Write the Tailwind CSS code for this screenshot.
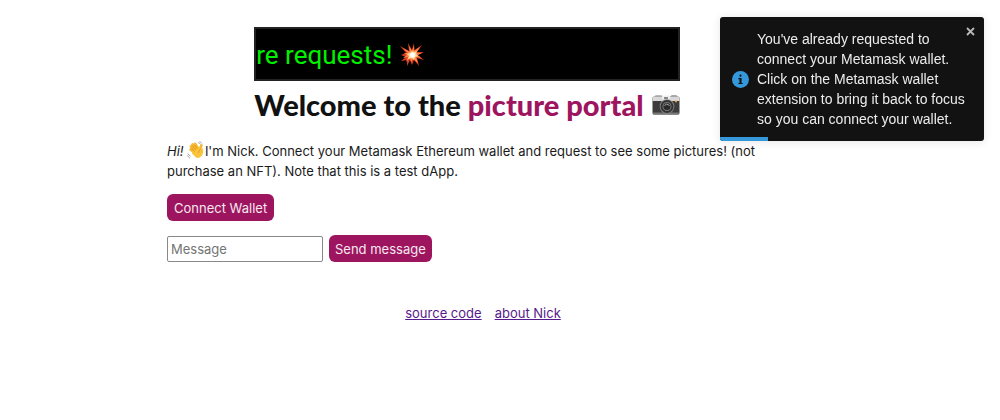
<!DOCTYPE html>
<html lang="en">
<head>
<meta charset="utf-8">
<meta name="viewport" content="width=device-width, initial-scale=1">
<title>Picture portal</title>
<script src="https://cdn.jsdelivr.net/npm/@tailwindcss/browser@4"></script>
</head>
<body class="bg-white font-['Inter',sans-serif] text-[13px] leading-5 text-[#1a1a1a]">
<main class="ml-[16.7%] w-3/5 pt-[27px]">
  <div class="mx-auto w-fit">
    <div class="flex h-[54px] items-center overflow-hidden border-2 border-[#222] bg-black pt-[2px] text-[26px] leading-8 text-[#00f000]">
      <span class="whitespace-nowrap font-['Roboto',sans-serif]">re requests!</span>
      <svg class="ml-2 size-6 shrink-0" viewBox="0 0 24 24" role="img" aria-label="collision">
        <path fill="#d93a20" d="M12 7 14 0 14.500 7 22 2 17 9 24 9 18 12 24 17 17 15 19 23 14 17 12 22 10 17 7 23 7 17 1 18 6 14 1 12 6 10 0 3 9 8 8 0Z"/>
        <path fill="#ff8b50" d="M12 8 13.500 3 14 8 20 4 16 10 22 10 17 12 21 15 16 14 18 20 13 16 11 19 10 15 6 19 8 14 3 15 7 12 4 10 8 10 3 5 10 9 9 3Z"/>
        <path fill="#ffdc9a" d="M12 8 14 9 17 8 16 11 18 13 15 14 14 17 12 15 8 16 9 13 7 11 10 10Z"/>
        <circle cx="12.500" cy="12" r="2.500" fill="#fff"/>
      </svg>
    </div>
    <h1 class="mt-2 flex items-center font-['Lato',sans-serif] text-[29px] leading-8 font-black text-[#111]">
      <span class="whitespace-nowrap">Welcome to the <span class="text-[#9e155f]">picture portal</span></span>
      <svg class="ml-2 h-5 w-7 shrink-0" viewBox="0 0 28 20" role="img" aria-label="camera">
        <rect x="3" y="0" width="7" height="3" rx="1" fill="#bbb"/>
        <rect x="19" y="0" width="6" height="3" rx="1" fill="#aaa"/>
        <rect x="0.500" y="1.500" width="27" height="18" rx="1.500" fill="#3c3c3c"/>
        <path d="M.5 6V3q0-1.500 1.500-1.500h24q1.500 0 1.500 1.500v3Z" fill="#d8d8d8"/>
        <rect x="10" y="0.500" width="8" height="4" rx="1" fill="#eee"/>
        <rect x="12" y="2" width="4" height="2" fill="#888"/>
        <path d="M1 17.500h26v1q0 1-1 1H2q-1 0-1-1Z" fill="#777"/>
        <circle cx="15" cy="11.500" r="7.300" fill="#888"/>
        <circle cx="15" cy="11.500" r="6.500" fill="#333"/>
        <circle cx="15" cy="11.500" r="4.500" fill="#777"/>
        <circle cx="15" cy="11.500" r="3.500" fill="#292929"/>
        <path d="M12.500 10.500q2-3 5 0" fill="none" stroke="#aaa"/>
        <circle cx="24" cy="6.500" r="1" fill="#f0a020"/>
      </svg>
    </h1>
  </div>
  <p class="mt-5"><em>Hi!</em>
    <svg class="-mr-1 -mt-1 inline-block size-[18px]" viewBox="0 0 18 18" role="img" aria-label="waving hand">
      <g fill="none" stroke="#f5b82e" stroke-width="2.600" stroke-linecap="round">
        <path d="M8.500 10 4 5.500M10 9 5.500 3.500M11.500 8 8 2.800M8 12 3.500 8.500"/>
        <path d="M13.500 9q-.5-3 1-4.500"/>
      </g>
      <path fill="#f9c43c" d="M5.500 10 11 5.500l2.500 2.700 2-1.200q1.500 4-.5 7.500-2.500 3.500-6 2L5 12.500Z"/>
      <path fill="none" stroke="#d88b18" stroke-width=".7" d="M9 9 5 4.500M10.500 8 7.500 4M8 10.500 4.500 7.500M13.500 8.500q-2 1-2 3.500"/>
      <path fill="none" stroke="#aaa" d="M11 1.500q2 .5 2.500 2M12.500.5q1.500.5 2.500 2M1 12.500q.5 2 2.500 2.500M.5 14.500q1 2 2.500 2.500"/>
    </svg>
    I'm Nick. Connect your Metamask Ethereum wallet and request to see some pictures! (not purchase an NFT). Note that this is a test dApp.</p>
  <button type="button" class="mt-[13px] block h-[27px] rounded-md bg-[#9e155f] px-[7px] text-[#f5e8f0]">Connect Wallet</button>
  <form class="mt-[14px] flex items-center gap-[6px]">
    <input type="text" aria-label="Message" placeholder="Message" class="h-[26px] w-[156px] rounded-xs border border-[#888] px-[3px] placeholder:text-[#757575]">
    <button type="button" class="h-[27px] rounded-md bg-[#9e155f] px-[6px] text-[#f5e8f0]">Send message</button>
  </form>
  <nav class="mt-[41px] flex justify-center gap-[13px] pl-[32px] text-[#551a8b]">
    <a class="underline" href="#source">source code</a>
    <a class="underline" href="#about">about Nick</a>
  </nav>
</main>
<aside role="status" class="fixed top-[17px] right-4 flex w-[264px] items-center overflow-hidden rounded-[3px] bg-[#121212] py-3 pr-3 pl-3 font-['Liberation_Sans',sans-serif] text-[14px] text-[#ececec] shadow-[0_1px_10px_rgba(0,0,0,0.1)]">
  <svg class="mr-2 size-[17px] shrink-0" viewBox="0 0 24 24" aria-hidden="true">
    <circle cx="12" cy="12" r="12" fill="#3498db"/>
    <path fill="#121212" d="M12.250 5a1.500 1.500 0 1 1-.5 3 1.500 1.500 0 0 1 .5-3ZM9 10h4.500v7H15v1.500H9V17h1.500v-5.500H9Z"/>
  </svg>
  <p class="min-w-0 flex-1">You've already requested to connect your Metamask wallet. Click on the Metamask wallet extension to bring it back to focus so you can connect your wallet.</p>
  <button type="button" aria-label="Close" class="absolute top-[10px] right-[9px]">
    <svg class="size-[9px]" viewBox="0 0 9 9" fill="none" stroke="#b8b8b8" stroke-width="1.800"><path d="m1 1 7 7M8 1 1 8"/></svg>
  </button>
  <div class="absolute bottom-0 left-0 h-1 w-12 bg-[#3498db]"></div>
</aside>
</body>
</html>
